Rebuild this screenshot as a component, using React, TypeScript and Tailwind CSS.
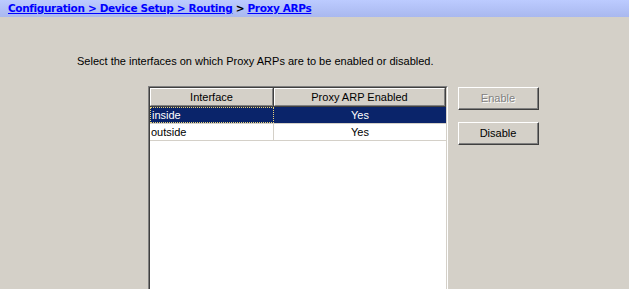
const rows = [
  { name: 'inside', enabled: 'Yes' },
  { name: 'outside', enabled: 'Yes' },
];

function Bouton({ label, disabled }: { label: string; disabled?: boolean }) {
  return (
    <button
      className="h-[23px] w-[81px] border border-t-white border-l-white border-r-[#404040] border-b-[#404040] bg-[#d4d0c8]"
      disabled={disabled}
    >
      <div className="flex h-full w-full items-center justify-center border-r border-b border-[#808080]">
        <span className={disabled ? 'text-[#808080] [text-shadow:1px_1px_0_#fff]' : 'text-black'}>{label}</span>
      </div>
    </button>
  );
}

function Entete({ label, className }: { label: string; className: string }) {
  return (
    <div className={`border-r border-b border-r-[#404040] border-b-[#404040] ${className}`}>
      <div className="flex h-[18px] items-center justify-center border-t border-l border-r border-b border-t-white border-l-white border-r-[#808080] border-b-[#808080] bg-[#d4d0c8]">
        {label}
      </div>
    </div>
  );
}

export default function App() {
  return (
    <div className="h-[289px] w-[629px] overflow-hidden bg-[#d4d0c8] font-['Liberation_Sans',Arial,sans-serif] text-[11px] text-black">
      <div className="flex h-[17px] items-center bg-gradient-to-b from-[#bccbff] to-[#a9b8ef] pl-[8px] font-['DejaVu_Sans',sans-serif] text-[10.5px] font-bold tracking-[-0.35px]">
        <a className="text-[#0000ff] underline">Configuration &gt; Device Setup &gt; Routing </a>
        <span className="whitespace-pre"> &gt; </span>
        <a className="text-[#0000ff] underline">Proxy ARPs</a>
      </div>

      <p className="mt-[38px] ml-[77px] leading-[13px]">
        Select the interfaces on which Proxy ARPs are to be enabled or disabled.
      </p>

      <div className="mt-[18px] ml-[148px] flex gap-[10px]">
        <div className="h-[220px] w-[300px] border border-t-[#808080] border-l-[#808080] border-r-white border-b-white">
          <div className="h-full w-full border border-t-[#404040] border-l-[#404040] border-r-[#d4d0c8] border-b-[#d4d0c8] bg-white">
            <div className="flex">
              <Entete label="Interface" className="w-[124px]" />
              <Entete label="Proxy ARP Enabled" className="flex-1" />
            </div>
            {rows.map((r, i) => (
              <div
                key={r.name}
                className={`flex h-[17px] border-b border-[#d4d0c8] ${i === 0 ? 'bg-[#0a246a] text-white' : ''}`}
              >
                <div
                  className={`flex w-[124px] items-center border-r border-[#d4d0c8] pl-[1px] ${
                    i === 0 ? 'border border-dotted border-[#e8d27a]' : ''
                  }`}
                >
                  {r.name}
                </div>
                <div className="flex flex-1 items-center justify-center">{r.enabled}</div>
              </div>
            ))}
          </div>
        </div>

        <div className="mt-[1px] flex flex-col gap-[12px]">
          <Bouton label="Enable" disabled />
          <Bouton label="Disable" />
        </div>
      </div>
    </div>
  );
}
